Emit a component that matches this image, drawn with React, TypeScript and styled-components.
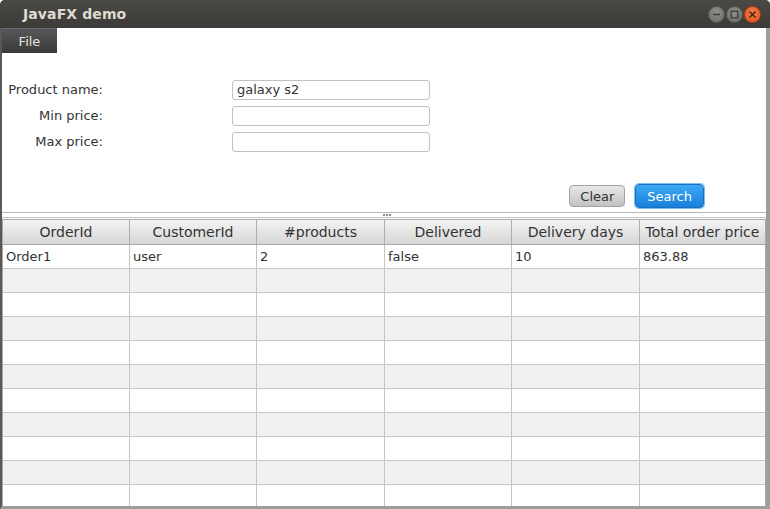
import { styled, createGlobalStyle } from "styled-components";

const GlobalStyle = createGlobalStyle`
  html, body {
    margin: 0;
    padding: 0;
    background: #ffffff;
  }
  * {
    box-sizing: border-box;
  }
`;

const columns = ["OrderId", "CustomerId", "#products", "Delivered", "Delivery days", "Total order price"];
const orders = [["Order1", "user", "2", "false", "10", "863.88"]];
const rowCount = 11;

const App = (): JSX.Element => {
  const rows = Array.from({ length: rowCount }, (_, i) => orders[i] || null);

  return (
    <Window>
      <GlobalStyle />
      <TitleBar>
        <Title>JavaFX demo</Title>
        <Controls>
          <WinButton>
            <svg width="9" height="9" viewBox="0 0 9 9">
              <path d="M1 4.5h7" stroke="#3c3b37" strokeWidth="1.4" />
            </svg>
          </WinButton>
          <WinButton>
            <svg width="9" height="9" viewBox="0 0 9 9">
              <rect x="1.2" y="1.2" width="6.6" height="6.6" fill="none" stroke="#3c3b37" strokeWidth="1.3" />
            </svg>
          </WinButton>
          <WinButton $close>
            <svg width="9" height="9" viewBox="0 0 9 9">
              <path d="M1.5 1.5l6 6M7.5 1.5l-6 6" stroke="#3c2010" strokeWidth="1.4" />
            </svg>
          </WinButton>
        </Controls>
      </TitleBar>
      <Body>
        <MenuBar>
          <MenuItem>File</MenuItem>
        </MenuBar>
        <TopPane>
          <Form>
            <Label>Product name:</Label>
            <Field>galaxy s2</Field>
            <Label>Min price:</Label>
            <Field />
            <Label>Max price:</Label>
            <Field />
          </Form>
          <ButtonRow>
            <Button>Clear</Button>
            <Button $primary>Search</Button>
          </ButtonRow>
        </TopPane>
        <Divider>
          <Grip>
            <span />
            <span />
            <span />
          </Grip>
        </Divider>
        <Table>
          <HeaderRow>
            {columns.map((c) => (
              <HeaderCell key={c}>{c}</HeaderCell>
            ))}
          </HeaderRow>
          {rows.map((row, i) => (
            <Row key={i} $odd={i % 2 === 1}>
              {columns.map((c, j) => (
                <Cell key={c}>{row ? row[j] : ""}</Cell>
              ))}
            </Row>
          ))}
        </Table>
      </Body>
    </Window>
  );
};

const Window = styled.div`
  width: 770px;
  height: 509px;
  display: flex;
  flex-direction: column;
  overflow: hidden;
  font-family: "DejaVu Sans", "Liberation Sans", sans-serif;
  background: #3c3b37;
  border-radius: 5px 5px 0 0;
`;

const TitleBar = styled.div`
  height: 28px;
  flex-shrink: 0;
  display: flex;
  align-items: center;
  justify-content: space-between;
  padding: 0 9px 0 23px;
  background: linear-gradient(#4a4945, #3c3b37);
`;

const Title = styled.span`
  color: #dfdbd2;
  font-size: 14px;
  font-weight: bold;
  letter-spacing: 0.1px;
`;

const Controls = styled.div`
  display: flex;
  gap: 1px;
  margin-top: 1px;
`;

const WinButton = styled.div<{ $close?: boolean }>`
  width: 17px;
  height: 17px;
  border-radius: 50%;
  display: flex;
  align-items: center;
  justify-content: center;
  border: 1px solid ${(p) => (p.$close ? "#b63c12" : "#575652")};
  background: ${(p) =>
    p.$close
      ? "radial-gradient(circle at 50% 35%, #f37e4c, #e0501d)"
      : "radial-gradient(circle at 50% 35%, #908f8b, #6b6a66)"};
`;

const Body = styled.div`
  flex: 1;
  display: flex;
  flex-direction: column;
  background: #ffffff;
  border-left: 2px solid #5a5955;
  border-right: 4px solid #9e9e9c;
  border-bottom: 3px solid #9e9e9c;
  min-height: 0;
`;

const MenuBar = styled.div`
  height: 25px;
  flex-shrink: 0;
  display: flex;
  background: #ffffff;
`;

const MenuItem = styled.div`
  width: 55px;
  height: 25px;
  display: flex;
  align-items: center;
  justify-content: center;
  color: #e6e3dc;
  font-size: 13px;
  background: linear-gradient(#57565a, #3a3a3a);
  border-top: 1px solid #6a6a6a;
`;

const TopPane = styled.div`
  height: 160px;
  flex-shrink: 0;
  display: flex;
  flex-direction: column;
  padding: 27px 0 0 6px;
  border-bottom: 1px solid #b8b8b8;
`;

const Form = styled.div`
  display: grid;
  grid-template-columns: 95px 198px;
  column-gap: 129px;
  row-gap: 6px;
  align-items: center;
`;

const Label = styled.div`
  text-align: right;
  font-size: 13px;
  color: #333333;
  margin-top: -1px;
`;

const Field = styled.div`
  height: 20px;
  border: 1px solid #c2c2c2;
  border-radius: 3px;
  background: #ffffff;
  padding: 0 4px;
  font-size: 13px;
  line-height: 18px;
  color: #333333;
`;

const ButtonRow = styled.div`
  display: flex;
  justify-content: flex-end;
  gap: 10px;
  margin-top: 33px;
  padding-right: 62px;
`;

const Button = styled.div<{ $primary?: boolean }>`
  height: ${(p) => (p.$primary ? "24px" : "22px")};
  margin-top: ${(p) => (p.$primary ? "-1px" : "0")};
  padding: 0 ${(p) => (p.$primary ? "11px" : "10px")};
  display: flex;
  align-items: center;
  border-radius: 4px;
  font-size: 13px;
  color: ${(p) => (p.$primary ? "#ffffff" : "#333333")};
  border: 1px solid ${(p) => (p.$primary ? "#1b6fc0" : "#a4a4a4")};
  background: ${(p) =>
    p.$primary ? "linear-gradient(#3ea8f5, #1880db)" : "linear-gradient(#e8e8e8, #c2c2c2)"};
  box-shadow: ${(p) => (p.$primary ? "0 0 0 1px #7cc0f5" : "none")};
`;

const Divider = styled.div`
  height: 5px;
  flex-shrink: 0;
  display: flex;
  justify-content: center;
  align-items: center;
  border-bottom: 1px solid #c4c4c4;
`;

const Grip = styled.div`
  display: flex;
  gap: 1px;
  margin-left: 5px;

  span {
    width: 2px;
    height: 2px;
    background: #8a8a8a;
  }
`;

const Table = styled.div`
  flex: 1;
  overflow: hidden;
  margin-top: 1px;
  border: 1px solid #a8a8a8;
  border-bottom: none;
`;

const gridColumns = "127px 127px 128px 127px 128px 1fr";

const HeaderRow = styled.div`
  display: grid;
  grid-template-columns: ${gridColumns};
  height: 25px;
  background: linear-gradient(#f4f4f4, #d6d6d6);
  border-bottom: 1px solid #a8a8a8;
`;

const HeaderCell = styled.div`
  display: flex;
  align-items: center;
  justify-content: center;
  font-size: 14px;
  color: #333333;
  border-right: 1px solid #b0b0b0;
  white-space: nowrap;
  overflow: hidden;

  &:last-child {
    border-right: none;
  }
`;

const Row = styled.div<{ $odd: boolean }>`
  display: grid;
  grid-template-columns: ${gridColumns};
  height: 24px;
  background: ${(p) => (p.$odd ? "#f1f1f1" : "#ffffff")};
  border-bottom: 1px solid #c8c8c8;
`;

const Cell = styled.div`
  display: flex;
  align-items: center;
  padding-left: 3px;
  font-size: 13px;
  color: #333333;
  border-right: 1px solid #c4c4c4;

  &:last-child {
    border-right: none;
  }
`;

export default App;
